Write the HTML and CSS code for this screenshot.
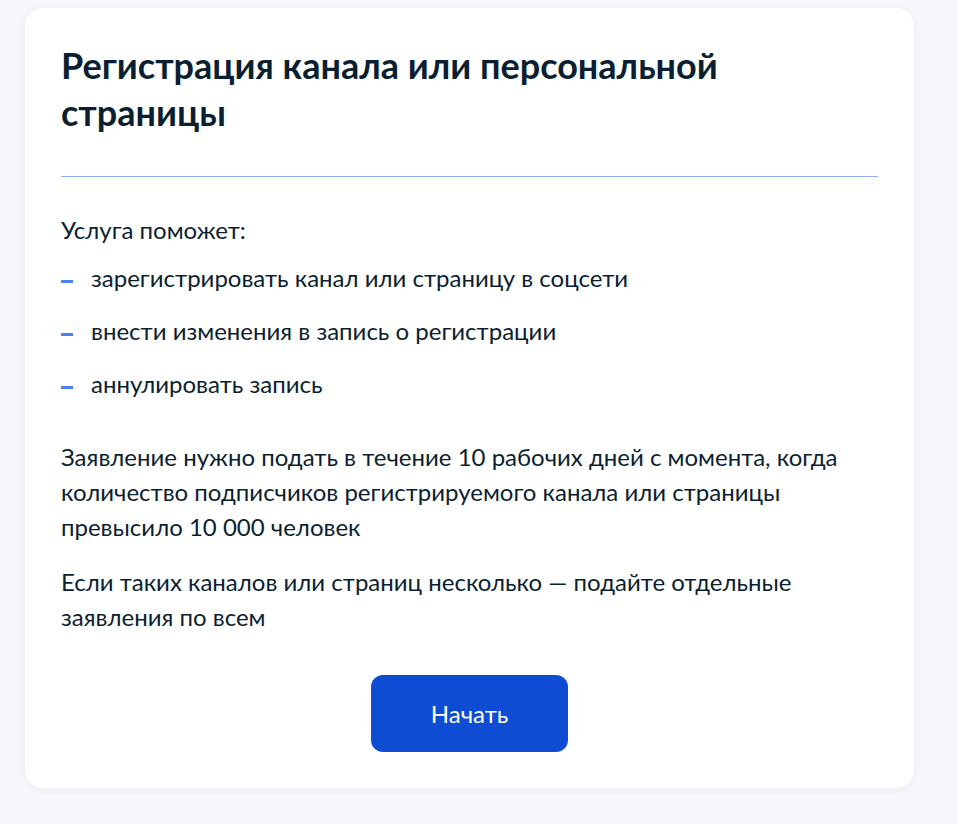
FILE: index.html
```html
<!DOCTYPE html>
<html lang="ru">
<head>
<meta charset="utf-8">
<title>Регистрация канала или персональной страницы</title>
<link rel="stylesheet" href="styles.css">
</head>
<body>
<div class="page">
  <section class="card">
    <h1 class="title">Регистрация канала или персональной страницы</h1>
    <hr class="divider">
    <p class="lead">Услуга поможет:</p>
    <ul class="list">
      <li>зарегистрировать канал или страницу в соцсети</li>
      <li>внести изменения в запись о регистрации</li>
      <li>аннулировать запись</li>
    </ul>
    <p class="text first">Заявление нужно подать в течение 10 рабочих дней с момента, когда количество подписчиков регистрируемого канала или страницы превысило 10 000 человек</p>
    <p class="text">Если таких каналов или страниц несколько — подайте отдельные заявления по всем</p>
    <div class="actions">
      <button class="btn" type="button">Начать</button>
    </div>
  </section>
</div>
</body>
</html>
```

FILE: styles.css
```css
html, body {
  margin: 0;
  padding: 0;
  background: #f5f7fb;
}
body {
  font-family: Lato, "Noto Sans", "Liberation Sans", sans-serif;
  color: #0b1f33;
}
.page {
  padding: 8px 44px 36px 25px;
}
.card {
  background: #ffffff;
  border-radius: 18px;
  box-shadow: 0 1px 10px rgba(11, 31, 51, 0.06);
  padding: 34px 36px 36px 36px;
}
.title {
  margin: 0;
  font-size: 36px;
  line-height: 47px;
  font-weight: 700;
  max-width: 720px;
}
.divider {
  border: 0;
  height: 1px;
  background: #8eafef;
  margin: 40px 0 35px 0;
}
.lead {
  margin: 0 0 13px 0;
  font-size: 24px;
  line-height: 35px;
}
.list {
  list-style: none;
  margin: 0;
  padding: 0;
  display: flex;
  flex-direction: column;
  gap: 18px;
}
.list li {
  position: relative;
  padding-left: 30px;
  font-size: 24px;
  line-height: 35px;
}
.list li::before {
  content: "";
  position: absolute;
  left: 0;
  top: 20px;
  width: 12px;
  height: 3px;
  background: #4d80ef;
}
.text {
  margin: 20px 0 0 0;
  font-size: 24px;
  line-height: 35px;
}
.text.first {
  margin-top: 38px;
}
.actions {
  display: flex;
  justify-content: center;
  margin-top: 41px;
}
.btn {
  width: 197px;
  height: 77px;
  border: 0;
  border-radius: 12px;
  background: #0d4cd3;
  color: #ffffff;
  font-family: Lato, "Noto Sans", "Liberation Sans", sans-serif;
  font-size: 24px;
  font-weight: 400;
  cursor: pointer;
}
```
